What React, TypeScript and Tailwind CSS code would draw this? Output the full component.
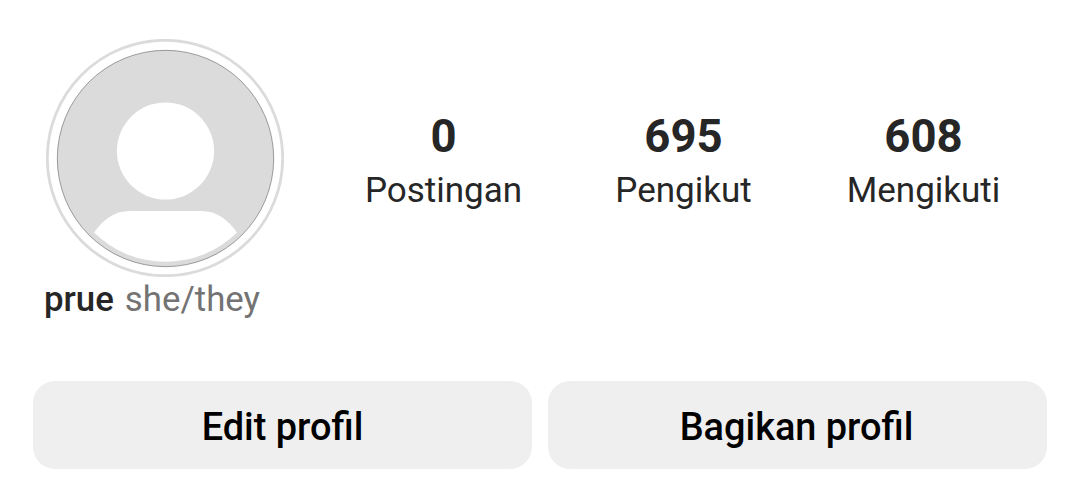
const stats = [
  { value: "0", label: "Postingan" },
  { value: "695", label: "Pengikut" },
  { value: "608", label: "Mengikuti" },
];

const Avatar = () => {
  return (
    <svg className="w-[238px] h-[238px] shrink-0" viewBox="0 0 238 238">
      {/* Outer ring */}
      <circle cx="119" cy="119" r="117.7" fill="#fff" stroke="#dbdbdb" strokeWidth="2.8" />
      {/* Disc with a hairline edge */}
      <circle cx="119.5" cy="119.5" r="108.2" fill="#dbdbdb" stroke="#333" strokeWidth="0.45" />
      <circle cx="119.5" cy="112" r="48.6" fill="#fff" />
      <path
        d="M48 193.5 C57 181 68 172 84 172 H155 C171 172 182 181 191 193.5 A102 102 0 0 1 48 193.5 Z"
        fill="#fff"
      />
    </svg>
  );
};

const App = () => {
  return (
    <div className="w-[1080px] h-[499px] bg-white overflow-hidden font-['Roboto',sans-serif] text-[#262626]">
      {/* Avatar and counters */}
      <div className="flex pt-[39px] pl-[46px]">
        <Avatar />
        <div className="flex ml-[39.5px] pt-[75px]">
          {stats.map((stat) => (
            <div key={stat.label} className="w-[240px] flex flex-col items-center">
              <span className="text-[45.5px] leading-[46px] font-bold">{stat.value}</span>
              <span className="mt-[8px] text-[35px] leading-[46px]">{stat.label}</span>
            </div>
          ))}
        </div>
      </div>

      {/* Name and pronouns */}
      <div className="flex gap-[11px] pl-[44px] text-[34.8px] leading-[44px]">
        <span className="font-medium">prue</span>
        <span className="text-[#737373]">she/they</span>
      </div>

      {/* Buttons */}
      <div className="flex gap-4 mt-[60px] pl-[33px] text-black">
        <button className="w-[499px] h-[88px] pt-[5px] rounded-[22px] bg-[#efefef] text-[37.9px] font-medium">
          Edit profil
        </button>
        <button className="w-[499px] h-[88px] pt-[5px] pr-[2px] rounded-[22px] bg-[#efefef] text-[37.9px] font-medium">
          Bagikan profil
        </button>
      </div>
    </div>
  );
};

export default App;
